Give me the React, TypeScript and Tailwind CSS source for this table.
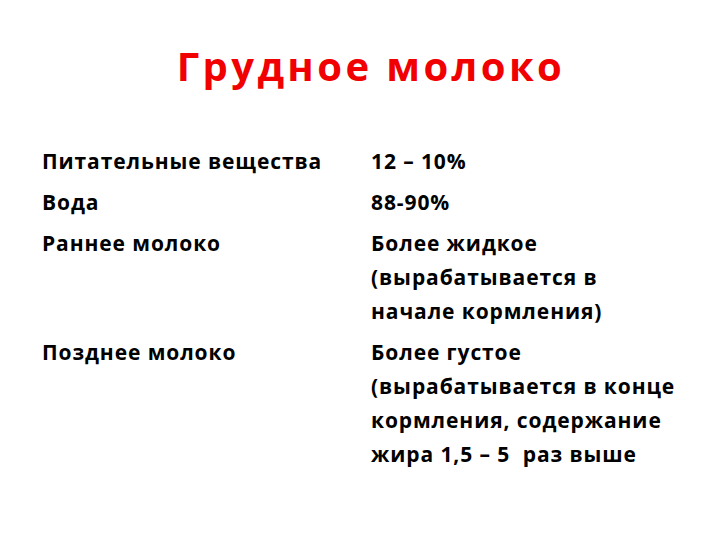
import React from "react";

const rows: { left: string; right: string[] }[] = [
  { left: "Питательные вещества", right: ["12 – 10%"] },
  { left: "Вода", right: ["88-90%"] },
  { left: "Раннее молоко", right: ["Более жидкое", "(вырабатывается в", "начале кормления)"] },
  {
    left: "Позднее молоко",
    right: ["Более густое", "(вырабатывается в конце", "кормления, содержание", "жира 1,5 – 5  раз выше"],
  },
];

export default function App() {
  return (
    <div
      className="w-[720px] h-[540px] bg-white text-black overflow-hidden"
      style={{ fontFamily: '"Open Sans", "Noto Sans", sans-serif' }}
    >
      <div className="pt-[44px] pl-[22px] flex justify-center">
        <h1 className="text-[40px] leading-[44px] font-bold tracking-[3.4px] text-[#f00000]">Грудное молоко</h1>
      </div>
      <div className="mt-[56px] pl-[42px] grid grid-cols-[329px_1fr] gap-y-[7px] text-[21px] leading-[34px] font-bold tracking-[0.9px]">
        {rows.map((r, i) => (
          <React.Fragment key={i}>
            <div>{r.left}</div>
            <div className="flex flex-col">
              {r.right.map((l, j) => (
                <span key={j} className="whitespace-pre">{l}</span>
              ))}
            </div>
          </React.Fragment>
        ))}
      </div>
    </div>
  );
}
